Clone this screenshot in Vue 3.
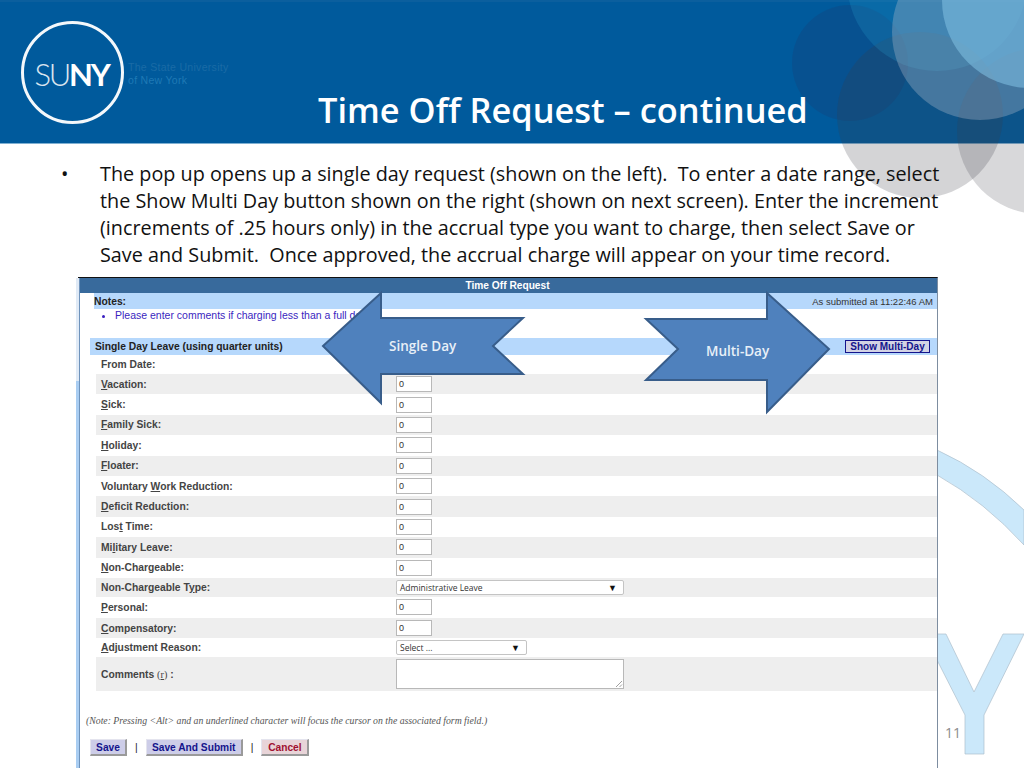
<script setup>
const lines = [
  'The pop up opens up a single day request (shown on the left).  To enter a date range, select',
  'the Show Multi Day button shown on the right (shown on next screen). Enter the increment',
  '(increments of .25 hours only) in the accrual type you want to charge, then select Save or',
  'Save and Submit.  Once approved, the accrual charge will appear on your time record.',
]
const rows = [
  { pre: '', key: 'V', post: 'acation:', value: '0' },
  { pre: '', key: 'S', post: 'ick:', value: '0' },
  { pre: '', key: 'F', post: 'amily Sick:', value: '0' },
  { pre: '', key: 'H', post: 'oliday:', value: '0' },
  { pre: '', key: 'F', post: 'loater:', value: '0' },
  { pre: 'Voluntary ', key: 'W', post: 'ork Reduction:', value: '0' },
  { pre: '', key: 'D', post: 'eficit Reduction:', value: '0' },
  { pre: 'Los', key: 't', post: ' Time:', value: '0' },
  { pre: 'Mi', key: 'l', post: 'itary Leave:', value: '0' },
  { pre: '', key: 'N', post: 'on-Chargeable:', value: '0' },
  { pre: 'Non-Chargeable T', key: 'y', post: 'pe:', select: 'Administrative Leave', wide: true, h: 19 },
  { pre: '', key: 'P', post: 'ersonal:', value: '0', h: 21 },
  { pre: '', key: 'C', post: 'ompensatory:', value: '0' },
  { pre: '', key: 'A', post: 'djustment Reason:', select: 'Select ...', h: 19 },
]
</script>

<template>
  <div class="slide">
    <svg class="decor" width="1024" height="768" viewBox="0 0 1024 768" aria-hidden="true">
      <rect width="1024" height="143" fill="#005a9c" />
      <rect width="1024" height="2" fill="#0b5f9e" />
      <rect y="143" width="1024" height="1" fill="#7fb0d2" />
      <circle cx="850" cy="63" r="58" fill="#0a4f8c" opacity="0.75" />
      <circle cx="920" cy="115" r="83" fill="#3c3c46" opacity="0.22" />
      <circle cx="1040" cy="131" r="83" fill="#3c3c46" opacity="0.2" />
      <circle cx="937" cy="-19" r="90" fill="#2aa5d0" opacity="0.22" />
      <circle cx="980" cy="32" r="88" fill="#a8b8c8" opacity="0.36" />
      <circle cx="1030" cy="0" r="88" fill="#7dbde0" opacity="0.6" />
      <path d="M937 450Q985 472 1024 510L1024 545Q985 502 937 475Z" fill="#cbe8fa" stroke="#aebfcc" stroke-width="0.7" />
      <path d="M937 634L946 634L974 692L1003 634L1024 634L984 715L984 754L965 754L965 715L937 660Z" fill="#cbe8fa" stroke="#aebfcc" stroke-width="0.7" />
    </svg>

    <header class="banner">
      <div class="brand">
        <div class="seal"><span class="su">SU</span><span class="ny">NY</span></div>
        <div class="tagline"><span class="faint">The State University</span><span>of New York</span></div>
      </div>
      <h1>Time Off Request – continued</h1>
    </header>

    <div class="bullet">
      <span class="dot">•</span>
      <div class="copy"><div v-for="line in lines" :key="line">{{ line }}</div></div>
    </div>

    <section class="panel">
      <div class="panel-title">Time Off Request</div>
      <div class="notes-head"><b>Notes:</b><span>As submitted at 11:22:46 AM</span></div>
      <ul class="notes"><li>Please enter comments if charging less than a full day</li></ul>
      <div class="section-head"><b>Single Day Leave (using quarter units)</b><button class="multi">Show Multi-Day</button></div>
      <div class="row from"><label>From Date:</label></div>
      <div v-for="(row, i) in rows" :key="i" class="row" :class="{ odd: i % 2 === 0 }" :style="row.h ? { height: row.h + 'px' } : null">
        <label>{{ row.pre }}<u>{{ row.key }}</u>{{ row.post }}</label>
        <div v-if="row.select" class="select" :class="{ wide: row.wide }"><span>{{ row.select }}</span><i>▼</i></div>
        <div v-else class="input">{{ row.value }}</div>
      </div>
      <div class="row odd comments">
        <label>Comments <em>(<u>r</u>)</em> :</label>
        <div class="textarea"><svg width="8" height="8" viewBox="0 0 8 8"><path d="M1 7L7 1M4.500 7L7 4.500" stroke="#888" stroke-width="0.8" /></svg></div>
      </div>
      <p class="hint">(Note: Pressing &lt;Alt&gt; and an underlined character will focus the cursor on the associated form field.)</p>
      <div class="actions">
        <button class="btn save">Save</button><span>|</span>
        <button class="btn submit">Save And Submit</button><span>|</span>
        <button class="btn cancel">Cancel</button>
      </div>

      <svg class="arrows" width="860" height="140" viewBox="78 278 860 140" aria-hidden="true">
        <path d="M323 346L381 293L381 318L523 318L493 346L523 374L381 374L381 403Z" class="arrow" />
        <path d="M646 319L767 319L767 293L829 349L767 412L767 380L646 380L678 349Z" class="arrow" />
      </svg>
      <span class="arrow-label single">Single Day</span>
      <span class="arrow-label multi-label">Multi-Day</span>
    </section>

    <span class="page">11</span>
  </div>
</template>

<style>
html, body { margin: 0; background: #fff; }
</style>

<style scoped>
.slide {
  position: relative;
  width: 1024px;
  height: 768px;
  overflow: hidden;
  font-family: "Open Sans", "Liberation Sans", sans-serif;
  background: #fff;
}
.decor { position: absolute; left: 0; top: 0; }
.banner {
  position: relative;
  height: 144px;
  display: flex;
  align-items: flex-start;
}
.brand {
  display: flex;
  align-items: center;
  gap: 4px;
  margin: 21px 0 0 21px;
}
.seal {
  box-sizing: border-box;
  width: 103px;
  height: 103px;
  padding: 2px 2px 0 0;
  border: 3px solid #f4f8fb;
  border-radius: 50%;
  display: flex;
  align-items: center;
  justify-content: center;
  color: #fff;
  font-family: Lato, "Open Sans", sans-serif;
  font-size: 31px;
  letter-spacing: -2.300px;
}
.su { font-weight: 300; opacity: .85; }
.ny { font-weight: 700; }
.tagline {
  display: flex;
  flex-direction: column;
  font-family: "Liberation Sans", sans-serif;
  font-size: 10.500px;
  line-height: 13px;
  color: #1f79b5;
  letter-spacing: .3px;
  margin-top: 2px;
}
.faint { color: #1a6ba6; }
h1 {
  position: absolute;
  left: 318px;
  top: 85px;
  margin: 0;
  font-size: 34.400px;
  line-height: 50px;
  font-weight: 600;
  color: #fff;
  white-space: nowrap;
}
.bullet {
  position: relative;
  display: flex;
  margin: 16px 0 0 61px;
  color: #111;
  font-size: 19.800px;
  line-height: 27px;
}
.dot { width: 39px; }
.copy { white-space: pre; }
.panel {
  position: relative;
  box-sizing: border-box;
  width: 860px;
  height: 500px;
  margin: 9px 0 0 78px;
  border-top: 1px solid #111;
  border-right: 1px solid #7d8da0;
  background: #fff;
  font-family: "Liberation Sans", sans-serif;
  font-size: 10.300px;
  color: #333;
}
.panel::before {
  content: "";
  position: absolute;
  left: -2px;
  top: 0;
  bottom: 0;
  width: 3px;
  background: linear-gradient(#e0eaf6 103px, #a9cdf2 103px);
  border-right: 1px solid #6f93bb;
}
.panel-title {
  height: 15px;
  background: #386a9c;
  color: #fff;
  font-weight: 700;
  font-size: 10.200px;
  line-height: 15px;
  text-align: center;
}
.notes-head {
  height: 16px;
  margin-left: 16px;
  padding: 0 4px 0 0;
  background: #b6d8fc;
  display: flex;
  justify-content: space-between;
  align-items: center;
}
.notes-head b { color: #222; }
.notes-head span { font-size: 9.500px; }
.notes {
  height: 29px;
  margin: 0;
  padding: 0 0 0 37px;
  color: #3a1fc0;
  font-size: 10.500px;
  line-height: 13px;
  list-style: disc;
}
.section-head {
  height: 17px;
  margin-left: 12px;
  padding: 0 7px 0 5px;
  background: #b6d8fc;
  display: flex;
  justify-content: space-between;
  align-items: center;
  color: #222;
}
.multi {
  box-sizing: border-box;
  width: 85px;
  height: 13px;
  padding: 0;
  border: 1px solid #14148c;
  background: #d3d3e4;
  color: #14148c;
  font: 700 10px/11px "Liberation Sans", sans-serif;
}
.row {
  box-sizing: border-box;
  height: 20.400px;
  margin-left: 18px;
  padding-left: 5px;
  display: flex;
  align-items: center;
  position: relative;
}
.row.from { height: 19px; }
.row.odd { background: #eeeeee; }
label { width: 295px; flex: none; font-weight: 700; color: #444; }
.input {
  box-sizing: border-box;
  width: 36px;
  height: 16px;
  border: 1px solid #b8b8b8;
  background: #fff;
  padding-left: 2px;
  font-size: 9px;
  line-height: 14px;
}
.select {
  box-sizing: border-box;
  width: 131px;
  height: 15px;
  border: 1px solid #c4c4c4;
  border-radius: 2px;
  background: #fff;
  padding: 0 6px 0 3px;
  display: flex;
  justify-content: space-between;
  align-items: center;
  font-family: "Open Sans", sans-serif;
  font-size: 8.500px;
}
.select.wide { width: 228px; }
.select i { font-style: normal; font-size: 9px; color: #111; }
.row.comments { height: 34px; }
em { font-family: "Liberation Serif", serif; font-style: normal; font-weight: 400; }
.textarea {
  box-sizing: border-box;
  width: 228px;
  height: 30px;
  border: 1px solid #b8b8b8;
  background: #fff;
  display: flex;
  justify-content: flex-end;
  align-items: flex-end;
}
.textarea svg { display: block; }
.hint {
  margin: 24px 0 0 8px;
  font-family: "Liberation Serif", serif;
  font-size: 9.750px;
  font-style: italic;
  line-height: 12px;
  color: #555;
}
.actions {
  display: flex;
  align-items: center;
  gap: 8px;
  margin: 12px 0 0 12px;
  color: #222;
}
.btn {
  box-sizing: border-box;
  height: 17px;
  padding: 0;
  border-style: solid;
  border-width: 1px 2px 2px 1px;
  border-color: #e4e4ee #9a9a9a #9a9a9a #e4e4ee;
  background: #cdcde8;
  color: #14148c;
  font: 700 10.200px/13px "Liberation Sans", sans-serif;
}
.save { width: 37px; }
.submit { width: 97px; }
.cancel { width: 48px; background: #e8d4d8; color: #a01030; }
.arrows { position: absolute; left: 0; top: 0; overflow: visible; }
.arrow { fill: #4f81bd; stroke: #385d8a; stroke-width: 2; }
.arrow-label {
  position: absolute;
  font-family: "Open Sans", sans-serif;
  font-size: 13.500px;
  font-weight: 600;
  line-height: 16px;
  color: #e8f0f8;
}
.single { left: 311px; top: 60px; }
.multi-label { left: 628px; top: 65px; }
.page {
  position: absolute;
  left: 945px;
  top: 723px;
  font-size: 14px;
  line-height: 20px;
  color: #8c8c8c;
}
</style>
